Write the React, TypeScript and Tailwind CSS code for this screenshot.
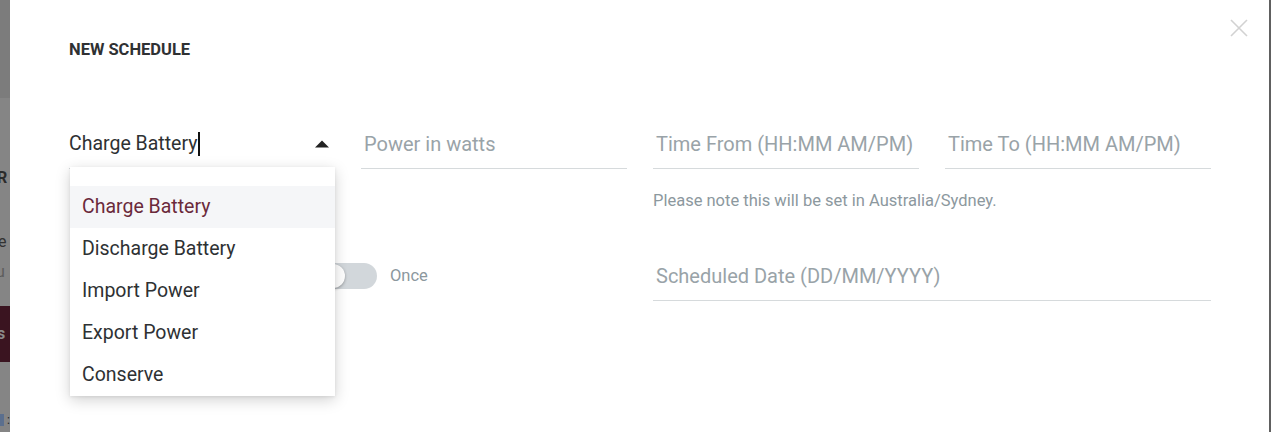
const options = [
  "Charge Battery",
  "Discharge Battery",
  "Import Power",
  "Export Power",
  "Conserve",
];

function Field({ placeholder }: { placeholder: string }) {
  return (
    <div className="flex h-[50px] items-center border-b border-[#d6dadc] px-[3px] text-[20px] text-[#99a3a8]">
      {placeholder}
    </div>
  );
}

function BackdropStrip() {
  // what's left visible of the page behind the modal
  return (
    <div className="flex w-[10px] shrink-0 flex-col overflow-hidden bg-[#858585] text-[16px]">
      <div className="h-[98px] bg-[#7c7c7c]" />
      <div className="mt-[68px] -ml-[3px] font-bold leading-[24px] text-[#2b2b2b]">R</div>
      <div className="mt-[40px] -ml-[2px] leading-[24px] text-[#333]">e</div>
      <div className="mt-[6px] -ml-[4px] leading-[24px] text-[#5d5d5d]">u</div>
      <div className="mt-[22px] flex h-[56px] items-center bg-[#3a1420] -ml-[3px] font-bold text-[#8a8a8a]">s</div>
      <div className="mt-[52px] flex items-center gap-[3px]">
        <span className="h-[12px] w-[4px] bg-[#5b6f8e]" />
        <span className="text-[12px] leading-none text-[#222]">:</span>
      </div>
    </div>
  );
}

export default function App() {
  return (
    <div className="flex h-[432px] w-[1271px] overflow-hidden bg-[#858585] font-['Roboto',sans-serif]">
      <BackdropStrip />

      <div className="relative flex-1 border-r-2 border-[#606060] bg-white pl-[59px] pt-[40px]">
        <button className="absolute right-[20px] top-[18px] text-[#d2d2d2]">
          <svg width="20" height="20" viewBox="0 0 20 20" fill="none" stroke="currentColor" strokeWidth="1.6">
            <path d="M2 2 L18 18 M18 2 L2 18" />
          </svg>
        </button>

        <h2 className="text-[16.5px] font-bold leading-[20px] text-[#2f3133]">
          NEW SCHEDULE
        </h2>

        <div className="mt-[59px] grid w-[1142px] grid-cols-4 gap-x-[26px]">
          <div className="relative">
            <div className="flex h-[50px] items-center justify-between border-b border-[#d6dadc] text-[19.5px] text-[#2e3133]">
              <span className="flex items-center">
                Charge Battery
                <span className="ml-[1px] h-[24px] w-[2px] bg-[#111]" />
              </span>
              <svg width="14" height="8" viewBox="0 0 14 8" className="mr-[6px]">
                <path d="M0 7.5 L7 0.5 L14 7.5 Z" fill="#222" />
              </svg>
            </div>

            <ul className="absolute left-[1px] right-0 top-[48px] z-10 bg-white pt-[19px] shadow-[0_4px_14px_rgba(0,0,0,0.18),0_1px_3px_rgba(0,0,0,0.08)]">
              {options.map((o, i) => (
                <li
                  key={o}
                  className={
                    i === 0
                      ? "flex h-[42px] items-center bg-[#f5f6f8] pl-[12px] text-[19.5px] text-[#6b2a3b]"
                      : "flex h-[42px] items-center pl-[12px] text-[19.5px] text-[#2e3133]"
                  }
                >
                  {o}
                </li>
              ))}
            </ul>
          </div>
          <Field placeholder="Power in watts" />
          <Field placeholder="Time From (HH:MM AM/PM)" />
          <Field placeholder="Time To (HH:MM AM/PM)" />

          <p className="col-span-2 col-start-3 mt-[22px] text-[16.5px] leading-[20px] text-[#8c989e]">
            Please note this will be set in Australia/Sydney.
          </p>
        </div>

        <div className="mt-[40px] grid w-[1142px] grid-cols-4 gap-x-[26px]">
          <div className="col-span-2 flex h-[50px] items-center">
            <div className="ml-[252px] flex h-[26px] w-[56px] items-center rounded-full bg-[#d2d7db]">
              <span className="h-[24px] w-[24px] rounded-full bg-white shadow-[0_1px_3px_rgba(0,0,0,0.3)]" />
            </div>
            <span className="ml-[13px] text-[16.5px] text-[#8c989e]">Once</span>
          </div>
          <div className="col-span-2">
            <Field placeholder="Scheduled Date (DD/MM/YYYY)" />
          </div>
        </div>
      </div>
    </div>
  );
}
